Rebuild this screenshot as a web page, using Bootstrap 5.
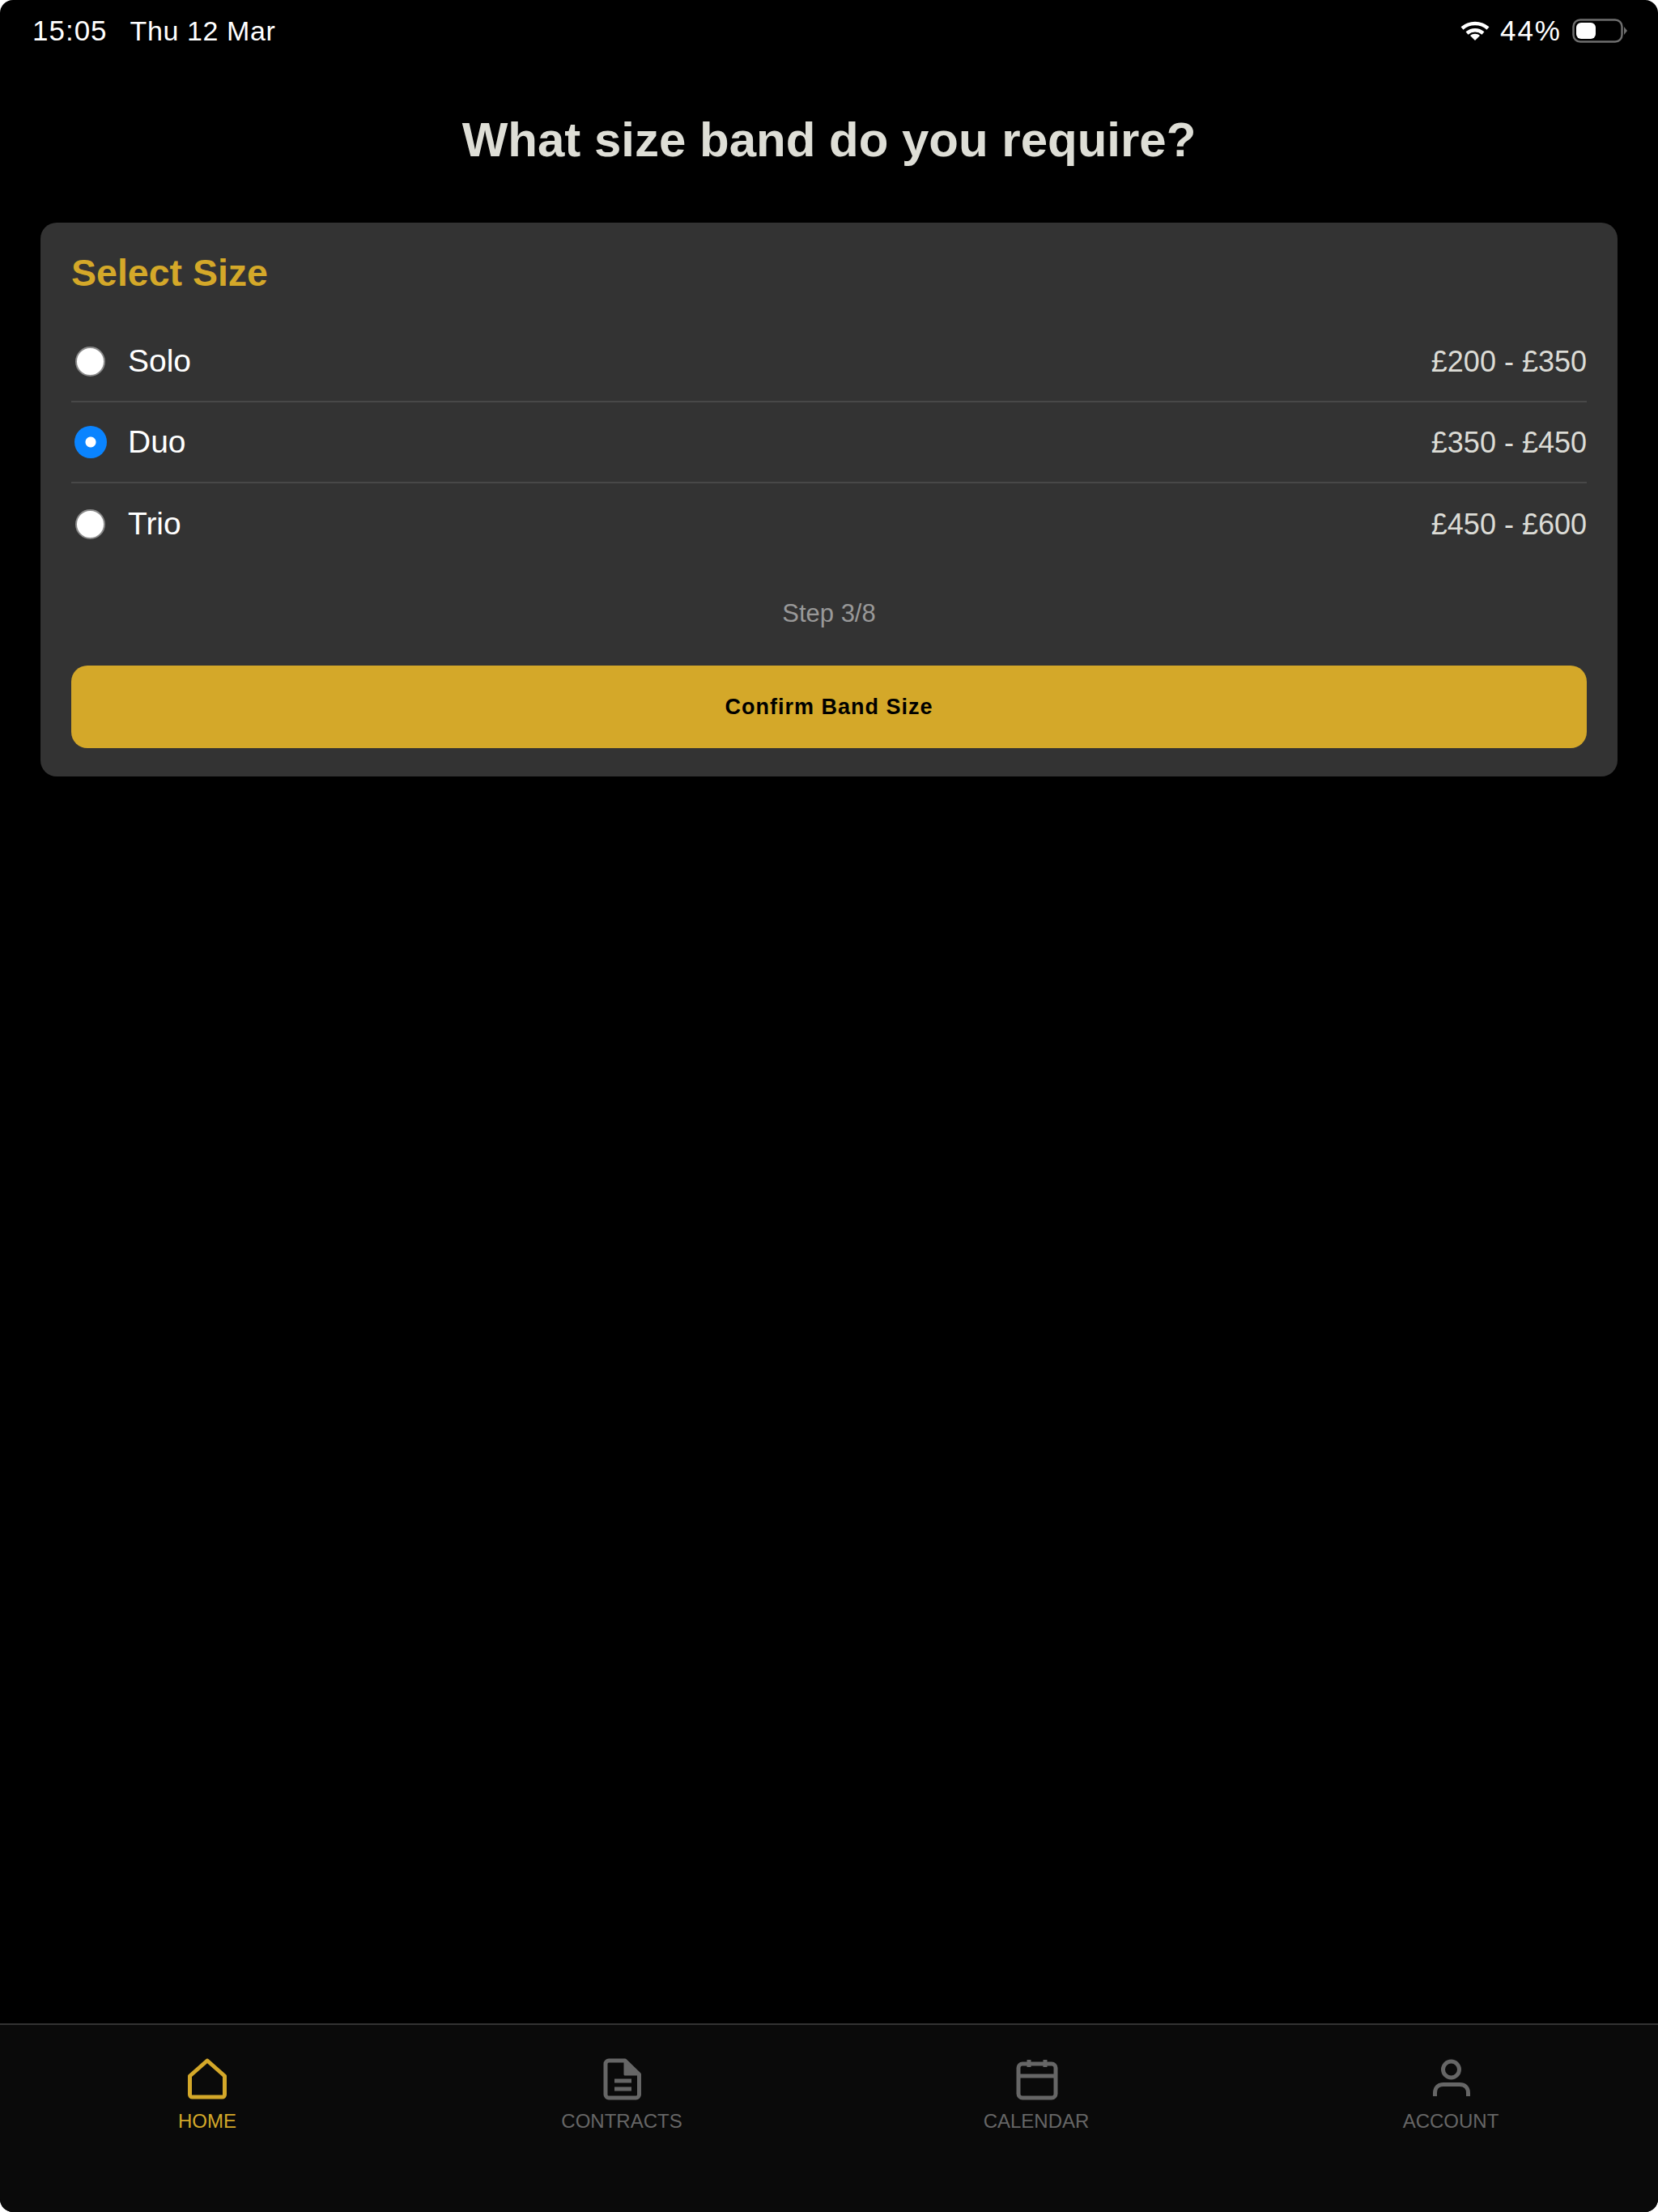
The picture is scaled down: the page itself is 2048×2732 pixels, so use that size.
<!DOCTYPE html>
<html lang="en">
<head>
    <meta charset="UTF-8">
    <meta name="viewport" content="width=device-width, initial-scale=1.0">
    <title>Select Size</title>
    <link rel="stylesheet" href="https://cdn.jsdelivr.net/npm/bootstrap@5.3.0/dist/css/bootstrap.min.css">
    <style>
        body {
            background-color: #fff;
            font-family: "Liberation Sans", Arial, sans-serif;
            color: #fff;
        }
        .screen {
            height: 2732px;
            background-color: #000;
            border-radius: 16px;
            overflow: hidden;
        }
        .status-bar {
            height: 76px;
            padding: 0 38px 0 40px;
        }
        .status-time {
            font-size: 35px;
            letter-spacing: 1px;
        }
        .status-date {
            font-size: 34px;
            letter-spacing: .6px;
            margin-left: 28px;
        }
        .status-right {
            gap: 13px;
        }
        .status-percent {
            font-size: 35px;
            letter-spacing: 2px;
        }
        .page-title {
            font-size: 60px;
            font-weight: 700;
            color: #deded6;
            margin: 46px 0 0;
            height: 102px;
            line-height: 102px;
        }
        .size-card {
            margin: 51px 50px 0;
            padding: 38px 38px 35px;
            background-color: #333;
            border-radius: 20px;
        }
        .size-heading {
            font-size: 46.5px;
            font-weight: 700;
            color: #d4a829;
            margin: 0 0 36px;
            line-height: 48px;
        }
        .size-row {
            height: 100px;
            border-bottom: 2px solid #484848;
        }
        .size-radio {
            width: 37px;
            height: 37px;
            margin: 0 28px 0 5px;
            border-radius: 50%;
            background-color: #fff;
            border: 2px solid #8a8a8a;
        }
        .size-radio.picked {
            width: 40px;
            height: 40px;
            margin: 0 26px 0 4px;
            border: 0;
            background: radial-gradient(circle, #fff 0 6px, #0a84ff 7px);
        }
        .size-name {
            font-size: 39px;
            margin-top: 1px;
        }
        .size-price {
            font-size: 36px;
            margin-top: 1px;
            color: #dcdcd6;
        }
        .step-text {
            font-size: 31px;
            color: #999;
            margin: 43px 0 46px;
            line-height: 36px;
        }
        .confirm-btn {
            height: 102px;
            font-size: 27px;
            font-weight: 700;
            letter-spacing: 1px;
            color: #000;
            background-color: #d4a829;
            border: 0;
            border-radius: 20px;
        }
        .tab-bar {
            height: 233px;
            background-color: #0a0a0a;
            border-top: 2px solid #333;
        }
        .tab-item {
            padding-top: 41px;
            color: #666;
            font-size: 24px;
            line-height: 30px;
        }
        .tab-item.active-tab {
            color: #d4a829;
        }
        .tab-item svg {
            width: 60px;
            height: 60px;
            margin-bottom: 3px;
        }
    </style>
</head>
<body>
    <div class="screen d-flex flex-column">
        <div class="status-bar d-flex align-items-center justify-content-between">
            <div><span class="status-time">15:05</span><span class="status-date">Thu 12 Mar</span></div>
            <div class="status-right d-flex align-items-center">
                <svg width="36" height="24" viewBox="0 0 36 24" fill="none" stroke="#fff" stroke-width="4.5">
                    <path d="M2 9C11 1 25 1 34 9"/>
                    <path d="M8 15C14 10 22 10 28 15"/>
                    <path d="M18 24l-6-6c3-3 9-3 12 0z" fill="#fff" stroke="none"/>
                </svg>
                <span class="status-percent">44%</span>
                <svg width="68" height="30" viewBox="0 0 68 30">
                    <rect x="1.5" y="1.5" width="60" height="27" rx="8.5" fill="none" stroke="#6e6e6e" stroke-width="2.5"/>
                    <rect x="5" y="5" width="24" height="20" rx="6" fill="#fff"/>
                    <path d="M64 10l4 5-4 5z" fill="#6e6e6e"/>
                </svg>
            </div>
        </div>

        <h1 class="page-title text-center">What size band do you require?</h1>

        <div class="size-card">
            <h2 class="size-heading">Select Size</h2>
            <div class="size-row d-flex align-items-center">
                <span class="size-radio"></span>
                <span class="size-name">Solo</span>
                <span class="size-price ms-auto">£200 - £350</span>
            </div>
            <div class="size-row d-flex align-items-center">
                <span class="size-radio picked"></span>
                <span class="size-name">Duo</span>
                <span class="size-price ms-auto">£350 - £450</span>
            </div>
            <div class="size-row d-flex align-items-center border-0">
                <span class="size-radio"></span>
                <span class="size-name">Trio</span>
                <span class="size-price ms-auto">£450 - £600</span>
            </div>
            <div class="step-text text-center">Step 3/8</div>
            <button class="btn confirm-btn w-100" type="button">Confirm Band Size</button>
        </div>

        <nav class="tab-bar mt-auto row g-0">
            <div class="col-3 tab-item active-tab text-center">
                <svg class="d-block mx-auto" viewBox="0 0 60 60" fill="none" stroke="#d4a829" stroke-width="5" stroke-linejoin="round">
                    <path d="M30 3L8.500 22v23a3 3 0 0 0 3 3h37a3 3 0 0 0 3-3V22z"/>
                </svg>
                <div>HOME</div>
            </div>
            <div class="col-3 tab-item text-center">
                <svg class="d-block mx-auto" viewBox="0 0 60 60" fill="none" stroke="#666" stroke-width="5" stroke-linejoin="round">
                    <path d="M14 3h20l17.500 17v25a4 4 0 0 1-4 4H14a4 4 0 0 1-4-4V7a4 4 0 0 1 4-4z"/>
                    <path d="M34 3v17h17.500" fill="#666" stroke-width="3"/>
                    <path d="M21 28h21M21 38h21"/>
                </svg>
                <div>CONTRACTS</div>
            </div>
            <div class="col-3 tab-item text-center">
                <svg class="d-block mx-auto" viewBox="0 0 60 60" fill="none" stroke="#666" stroke-width="5" stroke-linejoin="round">
                    <rect x="8" y="7" width="46" height="42" rx="5"/>
                    <path d="M8 22h46"/>
                    <path d="M21 2v9M41 2v9"/>
                </svg>
                <div>CALENDAR</div>
            </div>
            <div class="col-3 tab-item text-center">
                <svg class="d-block mx-auto" viewBox="0 0 60 60" fill="none" stroke="#666" stroke-width="5">
                    <circle cx="30.500" cy="14" r="10"/>
                    <path d="M10.500 47v-4c0-7 4.500-10.500 10.500-10.500h20c6 0 10.500 3.500 10.500 10.500v4"/>
                </svg>
                <div>ACCOUNT</div>
            </div>
        </nav>
    </div>
    <script src="https://cdn.jsdelivr.net/npm/bootstrap@5.3.0/dist/js/bootstrap.bundle.min.js"></script>
</body>
</html>
